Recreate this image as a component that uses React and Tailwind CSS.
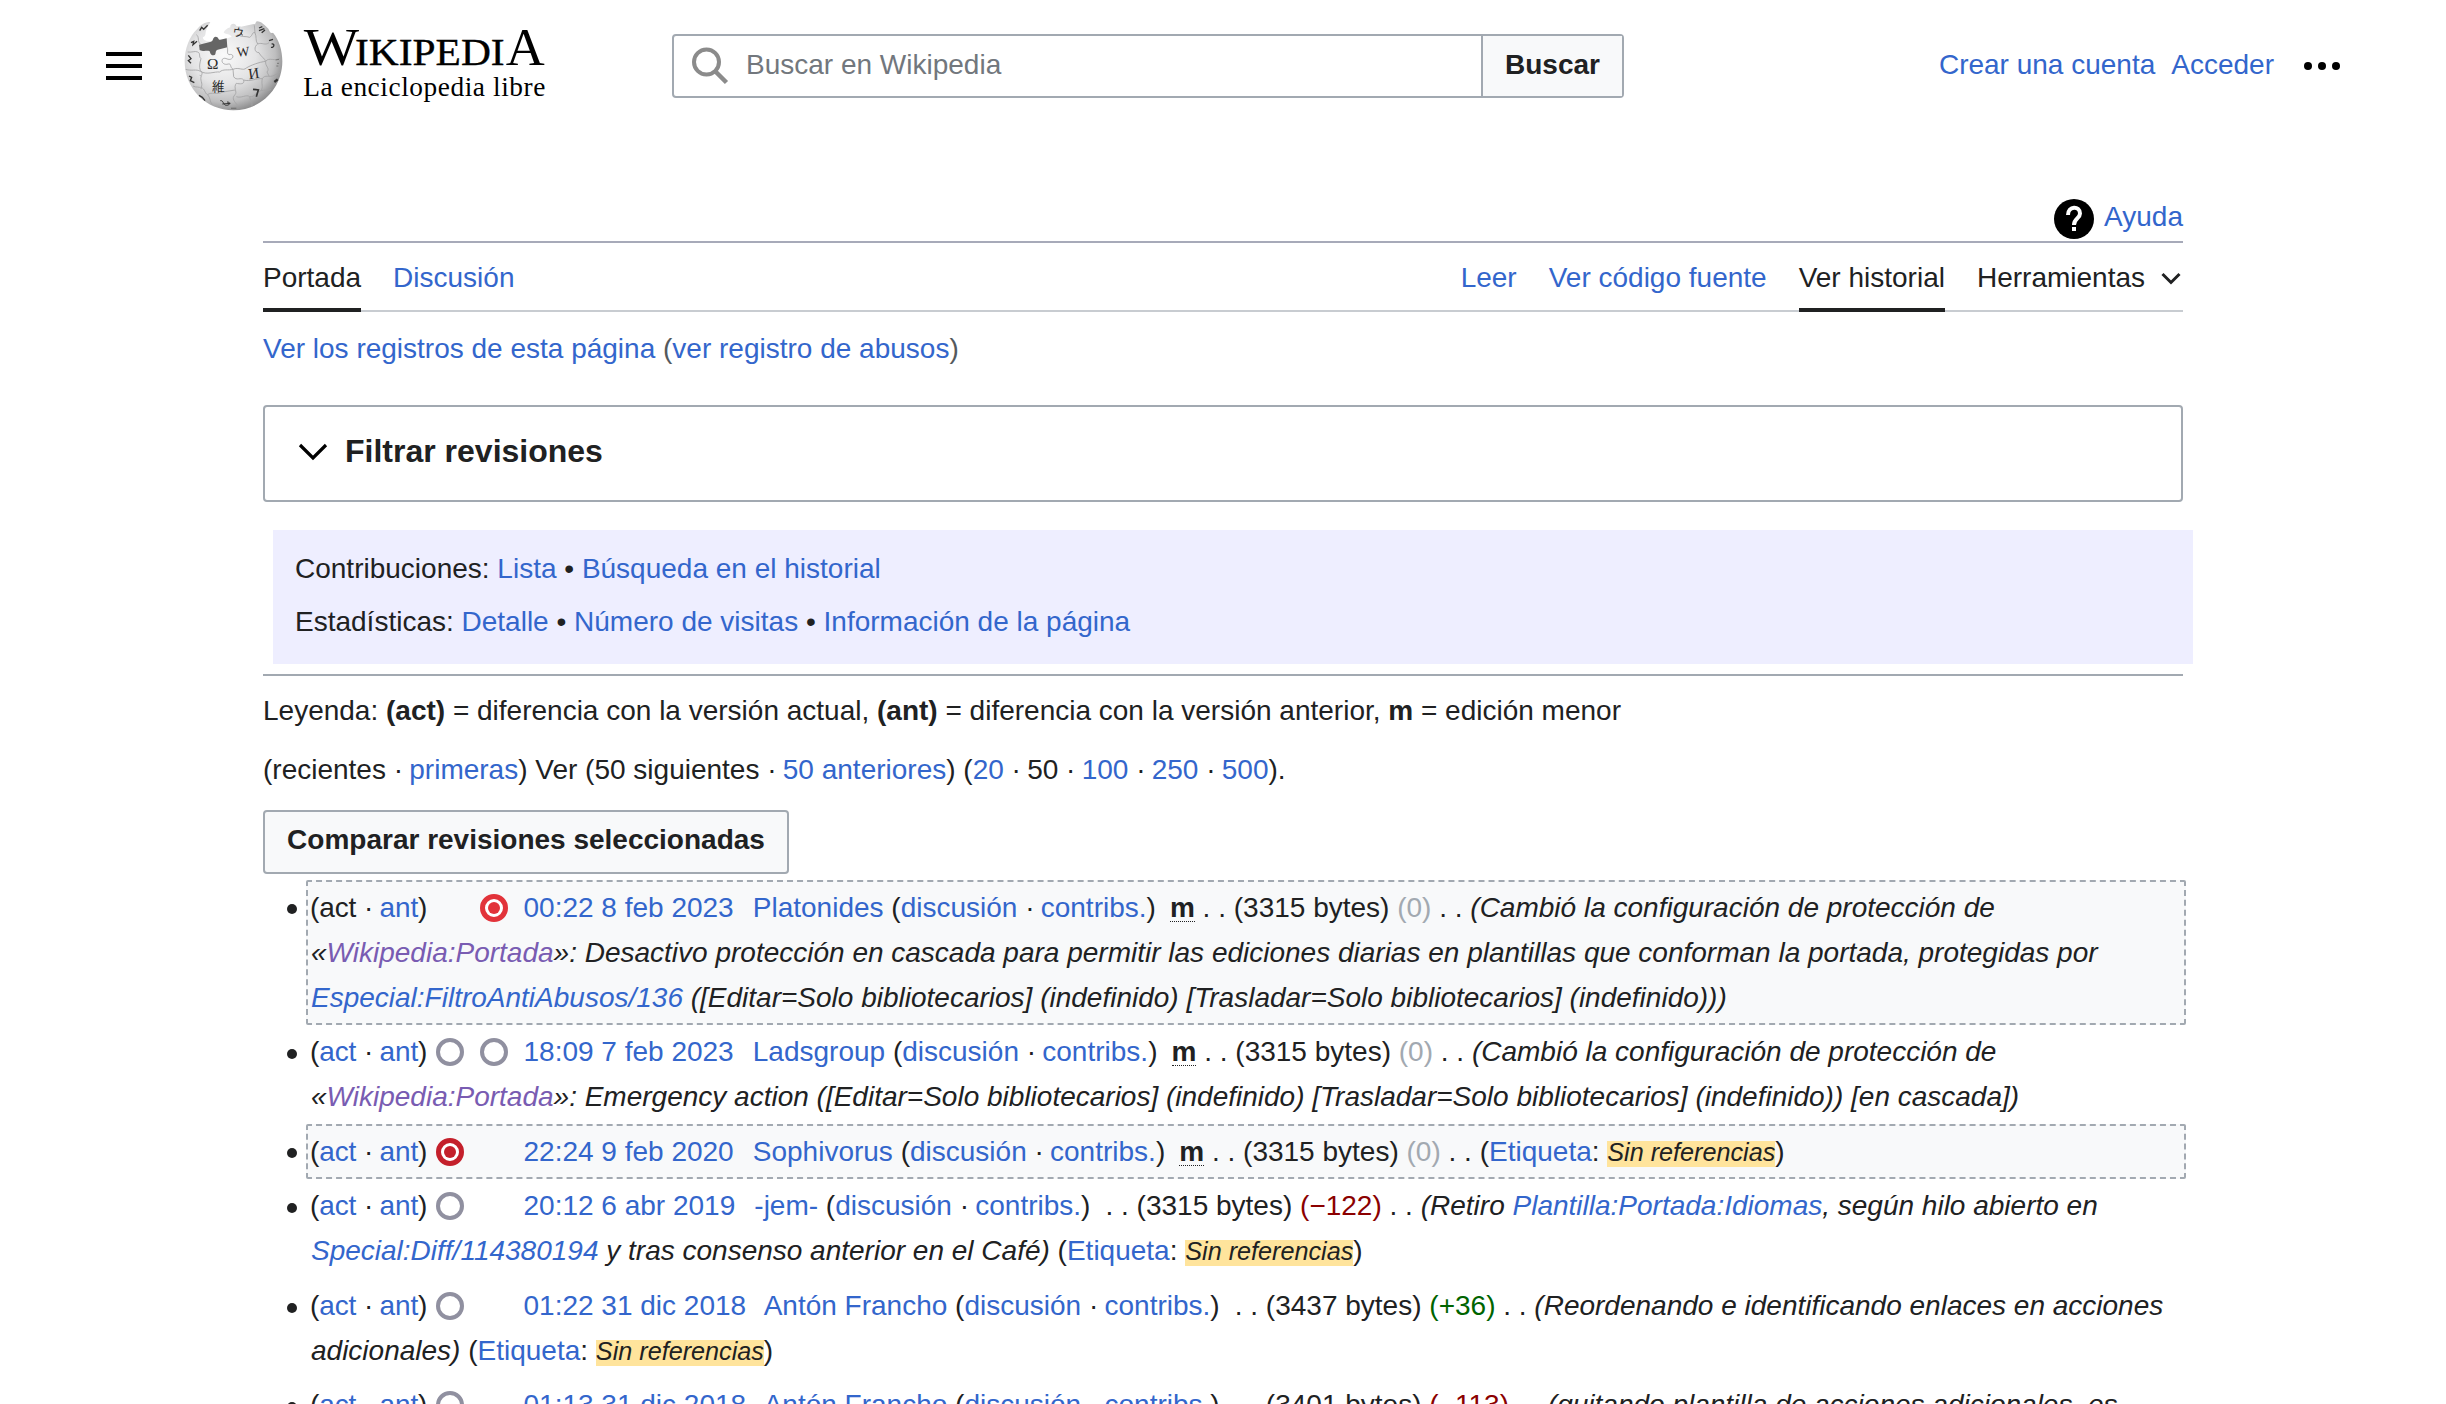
import React from "react";

const A = ({ children, className = "" }) => (
  <a className={`text-[#3366cc] ${className}`}>{children}</a>
);
const Visited = ({ children }) => <a className="text-[#795cb2]">{children}</a>;

const Dot = () => <span className="tracking-[-1.55px]">·</span>;

const Logo = () => (
  <svg className="ml-[41px] mt-[20px] h-[92px] w-[364px] shrink-0 self-start overflow-visible" viewBox="310 60 1092 276">
    <defs>
      <radialGradient id="ball" cx="0.4" cy="0.38" r="0.66">
        <stop offset="0" stopColor="#fafafa" />
        <stop offset="0.5" stopColor="#e4e4e5" />
        <stop offset="0.8" stopColor="#bebebf" />
        <stop offset="1" stopColor="#858586" />
      </radialGradient>
    </defs>
    <path
      d="M392 66 C376 66 362 74 352 88 C330 108 315 145 315 184 C315 266 379 331 461 331 C543 331 608 266 608 184 C608 150 598 120 580 98 C572 102 570 94 566 86 C556 78 546 64 532 64 C526 66 530 74 522 72 L484 80 C478 74 472 84 468 74 C462 68 450 72 452 82 C440 86 434 92 432 98 C440 104 450 100 456 110 L440 116 L388 124 C378 124 368 118 370 112 C380 108 376 98 380 90 C382 80 386 80 392 66 Z"
      fill="url(#ball)"
    />
    <path
      d="M358 134 L394 125 C402 122 398 112 408 110 C418 110 414 120 422 119 L441 115 L443 142 L414 149 C404 152 412 164 402 166 C392 167 392 158 390 154 C382 150 372 156 360 150 Z"
      fill="#656565"
    />
    <g fill="none" stroke="#a2a2a3" strokeWidth="2.5">
      <path d="M443 142 C446 154 440 160 448 164 C462 160 464 174 452 178 C442 180 436 170 428 178 C424 188 434 196 446 192 C456 190 450 202 460 208 L462 230" />
      <path d="M324 156 C336 158 346 152 354 156 C364 160 356 170 364 176 C360 190 358 200 362 212 C372 216 366 230 360 226" />
      <path d="M318 208 C336 214 350 206 362 214 C382 226 404 214 420 216 C430 206 446 212 460 208 C478 200 490 214 500 204 C512 196 540 186 558 184 C568 170 586 186 602 174" />
      <path d="M366 226 C358 240 372 250 364 262 C378 268 374 280 384 284 C396 274 410 286 430 276 L466 270" />
      <path d="M462 230 C470 244 484 230 492 240 C496 254 480 252 470 250 C460 262 474 276 466 284 C454 296 466 306 472 314" />
      <path d="M492 240 C512 246 530 234 548 236 C556 222 568 234 584 226 L602 216" />
      <path d="M474 104 C486 112 500 108 510 112 C520 106 516 96 526 98 L524 76" />
      <path d="M526 98 C532 112 526 120 534 132 C522 140 524 158 538 158 C542 168 556 176 558 184 C556 200 572 204 562 216 L568 228" />
      <path d="M534 132 C548 126 556 138 568 128" />
      <path d="M350 104 C360 110 352 124 362 132" />
      <path d="M548 236 C544 252 552 260 544 272 C526 278 526 292 510 290 C500 282 484 296 470 290" />
      <path d="M340 258 C350 264 358 258 366 266" />
      <path d="M544 272 C556 268 566 274 574 268" />
      <path d="M384 284 C394 296 388 302 398 314" />
      <path d="M510 290 C512 304 520 306 516 320" />
    </g>
    <g fill="#2c2c2c" style={{ fontFamily: '"Liberation Serif", "Noto Sans CJK JP", serif' }}>
      <text x="382" y="207" fontSize="46">Ω</text>
      <text x="472" y="170" fontSize="41" transform="rotate(-5 472 170)">W</text>
      <text x="508" y="238" fontSize="46" transform="rotate(-8 508 238)">И</text>
      <text x="397" y="272" fontSize="38" style={{ fontFamily: '"Noto Sans CJK JP", sans-serif' }}>維</text>
      <text x="457" y="107" fontSize="34" transform="rotate(8 457 107)" style={{ fontFamily: '"Noto Sans CJK JP", sans-serif' }}>ウ</text>
    </g>
    <g fill="none" stroke="#343434" strokeWidth="4">
      <path d="M520 268 L536 270 L530 290" strokeWidth="5" />
      <path d="M422 302 C432 300 430 316 440 316 C452 316 454 306 442 306 M428 312 L452 310" strokeWidth="3" />
      <path d="M568 122 L580 118 M576 132 C586 130 584 144 574 142" />
      <path d="M334 128 L342 124 L340 134 L352 124" />
      <path d="M360 92 L366 82 L372 88 L384 76" />
      <path d="M326 166 L334 176 L326 182 L334 190" />
      <path d="M328 228 L336 232 L332 242 L344 248" />
      <path d="M538 84 L548 80 M538 92 L554 86 M546 98 L556 90" />
      <path d="M484 98 L488 106" strokeWidth="3" />
      <path d="M588 180 L598 178 M592 190 L598 190 M590 198 L596 198" strokeWidth="3" stroke="#777" />
      <path d="M584 246 L594 238" strokeWidth="7" />
      <path d="M358 286 L368 292 L376 302" />
      <path d="M454 325 L470 325" stroke="#777" />
    </g>
    <g fill="#000" style={{ fontFamily: '"Liberation Serif", serif' }}>
      <text x="672" y="194" fontSize="157" textLength="166" lengthAdjust="spacingAndGlyphs">W</text>
      <text x="826" y="194" fontSize="112" textLength="449" lengthAdjust="spacingAndGlyphs" stroke="#000" strokeWidth="1">IKIPEDI</text>
      <text x="1278" y="194" fontSize="156" textLength="117" lengthAdjust="spacingAndGlyphs">A</text>
      <text x="671" y="288" fontSize="82" textLength="726" lengthAdjust="spacing">La enciclopedia libre</text>
    </g>
  </svg>
);

const Radio = ({ kind }) => (
  <span className="mr-[16px] flex h-[28px] w-[28px] items-center justify-center">
    {kind === "off" && <span className="h-[28px] w-[28px] rounded-full border-4 border-[#9090a0] bg-white" />}
    {kind === "red" && (
      <span className="flex h-[28px] w-[28px] items-center justify-center rounded-full border-[5px] border-[#e2333a] bg-white">
        <span className="h-[12px] w-[12px] rounded-full bg-[#e2333a]" />
      </span>
    )}
    {kind === "dark" && (
      <span className="flex h-[28px] w-[28px] items-center justify-center rounded-full border-[5px] border-[#c4202b] bg-white">
        <span className="h-[12px] w-[12px] rounded-full bg-[#c4202b]" />
      </span>
    )}
  </span>
);

const Tag = () => (
  <>
    (<A>Etiqueta</A>:{" "}
    <span className="inline-block h-[26px] bg-[#ffe49c] text-[25.2px] leading-[23px] italic">Sin referencias</span>)
  </>
);

const Minor = () => (
  <>
    {"\u00a0 "}
    <abbr className="inline-block h-[30px] border-b border-dotted border-[#202122] leading-[31px] font-bold no-underline">m</abbr>
  </>
);

const Row = ({ box, className, radios, noAct, date, user, minor, bytes, diff, diffClass, first, children }) => (
  <li className={`flex ${className}`}>
    <span className="mt-[24px] -ml-[19px] mr-[9px] h-[10px] w-[10px] shrink-0 rounded-full bg-[#202122]" />
    <div className={box}>
      <div className="flex h-[45px] items-center">
        <span className="-ml-[1px] w-[126px] shrink-0 tracking-[-0.1px]">
          ({noAct ? "act" : <A>act</A>} <Dot /> <A>ant</A>)
        </span>
        <Radio kind={radios[0]} />
        <Radio kind={radios[1]} />
        <span className="-ml-[0.500px] whitespace-pre">
          <A>{date}</A>
          <span className="ml-[3.500px]">{"  "}</span>
          <A>{user}</A> (<A>discusión</A> <Dot /> <A>contribs.</A>)
          <span className={minor ? "-ml-[1.500px]" : "-ml-[0.500px]"} />
          {minor ? <Minor /> : "\u00a0"} . . ({bytes} bytes) <span className={diffClass}>({diff})</span> . . {first}
        </span>
      </div>
      {children}
    </div>
  </li>
);

const Line = ({ children }) => <div className="h-[45px] whitespace-nowrap italic">{children}</div>;

const BOXED = "w-[1880px] shrink-0 rounded-[2px] border-2 border-dashed border-[#a2a9b1] bg-[#f8f9fa] pl-[3px]";
const PLAIN = "w-[1880px] shrink-0 pl-[5px]";
const GRAY = "text-[#a2a9b1]";

export default function App() {
  return (
    <div
      className="h-[1404px] w-[2446px] overflow-hidden bg-white text-[28px] leading-[45px] whitespace-nowrap text-[#202122]"
      style={{ fontFamily: '"Liberation Sans", Arial, sans-serif' }}
    >
      <header className="flex h-[132px] items-center px-[106px]">
        <div className="flex w-[36px] shrink-0 flex-col gap-[8px]">
          <span className="h-[4px] bg-black" />
          <span className="h-[4px] bg-black" />
          <span className="h-[4px] bg-black" />
        </div>
        <Logo />
        <div className="ml-[125px] flex h-[64px] w-[952px] rounded-[4px] border-2 border-[#a2a9b1]">
          <div className="flex flex-1 items-center">
            <svg className="ml-[17px] h-[38px] w-[38px]" viewBox="0 0 38 38" fill="none" stroke="#8b8b8b" strokeWidth="4">
              <circle cx="15.5" cy="15" r="12.5" />
              <path d="M24 24 L35.5 35.5" strokeWidth="4.5" />
            </svg>
            <span className="ml-[17px] pb-[3px] text-[#72777d]">Buscar en Wikipedia</span>
          </div>
          <button className="flex w-[141px] items-center justify-center border-l-2 border-[#a2a9b1] bg-[#f8f9fa] pb-[3px] font-bold">
            Buscar
          </button>
        </div>
        <div className="ml-auto flex items-center">
          <A className="pb-[3px]">Crear una cuenta</A>
          <A className="ml-[16px] pb-[3px]">Acceder</A>
          <svg className="ml-[30px] h-[8px] w-[36px]" viewBox="0 0 36 8">
            <circle cx="4" cy="4" r="4" />
            <circle cx="18" cy="4" r="4" />
            <circle cx="32" cy="4" r="4" />
          </svg>
        </div>
      </header>

      <main className="ml-[263px] w-[1920px]">
        <div className="flex h-[111px] items-end justify-end border-b-2 border-[#a7aab9] pb-[2px]">
          <svg className="mr-[10px] h-[40px] w-[40px]" viewBox="0 0 40 40">
            <circle cx="20" cy="20" r="20" />
            <path d="M14 16 C14 6.500 26 6.500 26 14.500 C26 19.500 20 19 20 26" fill="none" stroke="#fff" strokeWidth="4" />
            <path d="M18 28 h4 v4 h-4 z" fill="#fff" />
          </svg>
          <A>Ayuda</A>
        </div>

        <nav className="flex h-[69px] items-start border-b-2 border-[#c8ccd1]">
          <span className="h-[69px] border-b-4 border-[#202122] pt-[12px]">Portada</span>
          <A className="ml-[32px] pt-[12px]">Discusión</A>
          <A className="ml-auto pt-[12px]">Leer</A>
          <A className="ml-[32px] pt-[12px]">Ver código fuente</A>
          <span className="ml-[32px] h-[69px] border-b-4 border-[#202122] pt-[12px]">Ver historial</span>
          <span className="ml-[32px] flex items-center pt-[12px]">
            Herramientas
            <svg className="mt-[3px] mr-[2px] ml-[16px] h-[14px] w-[20px]" viewBox="0 0 20 14" fill="none" stroke="#202122" strokeWidth="3">
              <path d="M1.500 2 L10 10.500 L18.500 2" />
            </svg>
          </span>
        </nav>

        <p className="mt-[14px] text-[#54595d]">
          <A>Ver los registros de esta página</A> (<A>ver registro de abusos</A>)
        </p>

        <div className="mt-[34px] flex h-[97px] items-center rounded-[4px] border-2 border-[#a2a9b1] text-[32px] font-bold">
          <svg className="mr-[17px] mb-[4px] ml-[33px] h-[18px] w-[30px]" viewBox="0 0 30 18" fill="none" stroke="#000" strokeWidth="3.200">
            <path d="M2 2 L15 15 L28 2" />
          </svg>
          <span className="pb-[5px]">Filtrar revisiones</span>
        </div>

        <div className="mt-[28px] ml-[10px] h-[134px] w-[1920px] bg-[#eeeeff] pt-[12px] pl-[22px] leading-[53px]">
          <p>
            Contribuciones: <A>Lista</A> • <A>Búsqueda en el historial</A>
          </p>
          <p>
            Estadísticas: <A>Detalle</A> • <A>Número de visitas</A> • <A>Información de la página</A>
          </p>
        </div>
        <hr className="mt-[10px] h-[2px] border-0 bg-[#a2a9b1]" />

        <p className="mt-[12px]">
          Leyenda: <b>(act)</b> = diferencia con la versión actual, <b>(ant)</b> = diferencia con la versión anterior, <b>m</b> = edición menor
        </p>
        <p className="mt-[14px]">
          (recientes <Dot /> <A>primeras</A>) Ver (50 siguientes <Dot /> <A>50 anteriores</A>) (<A>20</A> <Dot /> 50 <Dot /> <A>100</A> <Dot />{" "}
          <A>250</A> <Dot /> <A>500</A>).
        </p>
        <button className="mt-[18px] flex h-[64px] w-[526px] items-center justify-center rounded-[4px] border-2 border-[#a2a9b1] bg-[#f8f9fa] pb-[5px] font-bold">
          Comparar revisiones seleccionadas
        </button>

        <ul className="mt-[6px] ml-[43px]">
          <Row
            className="h-[145px]"
            box={BOXED + " pt-[3px]"}
            radios={["none", "red"]}
            noAct
            date="00:22 8 feb 2023"
            user="Platonides"
            minor
            bytes="3315"
            diff="0"
            diffClass={GRAY}
            first={<i>(Cambió la configuración de protección de</i>}
          >
            <Line>
              «<Visited>Wikipedia:Portada</Visited>»: Desactivo protección en cascada para permitir las ediciones diarias en plantillas que conforman la portada, protegidas por
            </Line>
            <Line>
              <A>Especial:FiltroAntiAbusos/136</A> ([Editar=Solo bibliotecarios] (indefinido) [Trasladar=Solo bibliotecarios] (indefinido)))
            </Line>
          </Row>
          <Row
            className="h-[99px]"
            box={PLAIN + " pt-[4px]"}
            radios={["off", "off"]}
            date="18:09 7 feb 2023"
            user="Ladsgroup"
            minor
            bytes="3315"
            diff="0"
            diffClass={GRAY}
            first={<i>(Cambió la configuración de protección de</i>}
          >
            <Line>
              «<Visited>Wikipedia:Portada</Visited>»: Emergency action ([Editar=Solo bibliotecarios] (indefinido) [Trasladar=Solo bibliotecarios] (indefinido)) [en cascada])
            </Line>
          </Row>
          <Row
            className="h-[55px]"
            box={BOXED + " pt-[3px]"}
            radios={["dark", "none"]}
            date="22:24 9 feb 2020"
            user="Sophivorus"
            minor
            bytes="3315"
            diff="0"
            diffClass={GRAY}
            first={<Tag />}
          />
          <Row
            className="h-[100px]"
            box={PLAIN + " pt-[4px]"}
            radios={["off", "none"]}
            date="20:12 6 abr 2019"
            user="-jem-"
            bytes="3315"
            diff="−122"
            diffClass="text-[#8b0000]"
            first={<i>(Retiro <A>Plantilla:Portada:Idiomas</A>, según hilo abierto en</i>}
          >
            <Line>
              <A>Special:Diff/114380194</A> y tras consenso anterior en el Café) <span className="not-italic"><Tag /></span>
            </Line>
          </Row>
          <Row
            className="h-[99px]"
            box={PLAIN + " pt-[4px]"}
            radios={["off", "none"]}
            date="01:22 31 dic 2018"
            user="Antón Francho"
            bytes="3437"
            diff="+36"
            diffClass="text-[#006400]"
            first={<i>(Reordenando e identificando enlaces en acciones</i>}
          >
            <Line>
              adicionales) <span className="not-italic"><Tag /></span>
            </Line>
          </Row>
          <Row
            className="h-[55px]"
            box={PLAIN + " pt-[4px]"}
            radios={["off", "none"]}
            date="01:13 31 dic 2018"
            user="Antón Francho"
            bytes="3401"
            diff="−113"
            diffClass="text-[#8b0000]"
            first={<i>(quitando plantilla de acciones adicionales, es</i>}
          />
        </ul>
      </main>
    </div>
  );
}
